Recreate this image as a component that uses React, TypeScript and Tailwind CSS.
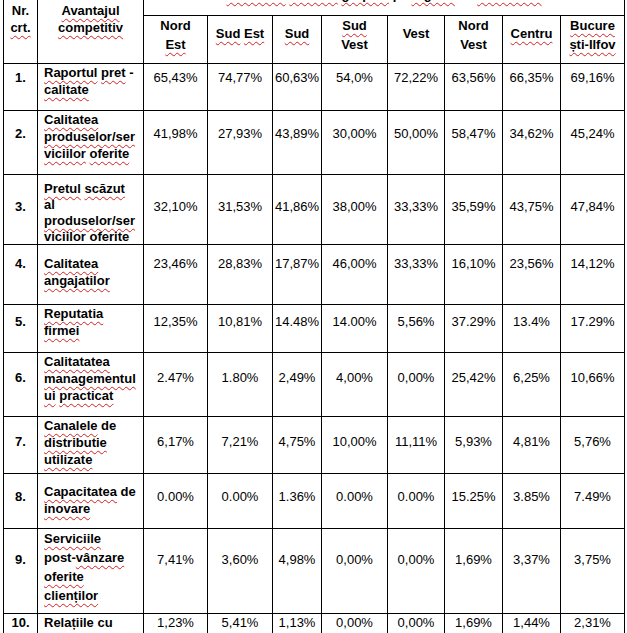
import React from "react";

type Row = {
  nr: string;
  label: string;
  vals: string[];
  lp: string;
  vp: string;
  lead: string;
};

const rows: Row[] = [
  { nr: "1.", label: "~Raportul ~pret -|~calitate", vals: ["65,43%", "74,77%", "60,63%", "54,0%", "72,22%", "63,56%", "66,35%", "69,16%"], lp: "pt-0", vp: "pt-[5px]", lead: "leading-[17px]" },
  { nr: "2.", label: "~Calitatea|~produselor/ser|~viciilor ~oferite", vals: ["41,98%", "27,93%", "43,89%", "30,00%", "50,00%", "58,47%", "34,62%", "45,24%"], lp: "pt-0", vp: "pt-[14px]", lead: "leading-[17px]" },
  { nr: "3.", label: "~Pretul ~scăzut|al|~produselor/ser|~viciilor ~oferite", vals: ["32,10%", "31,53%", "41,86%", "38,00%", "33,33%", "35,59%", "43,75%", "47,84%"], lp: "pt-[6px]", vp: "pt-[23px]", lead: "leading-[16px]" },
  { nr: "4.", label: "~Calitatea|~angajatilor", vals: ["23,46%", "28,83%", "17,87%", "46,00%", "33,33%", "16,10%", "23,56%", "14,12%"], lp: "pt-[10px]", vp: "pt-[10px]", lead: "leading-[17px]" },
  { nr: "5.", label: "~Reputatia|~firmei", vals: ["12,35%", "10,81%", "14.48%", "14.00%", "5,56%", "37.29%", "13.4%", "17.29%"], lp: "pt-0", vp: "pt-[8px]", lead: "leading-[17px]" },
  { nr: "6.", label: "~Calitatatea|~managementul|~ui ~practicat", vals: ["2.47%", "1.80%", "2,49%", "4,00%", "0,00%", "25,42%", "6,25%", "10,66%"], lp: "pt-0", vp: "pt-[16px]", lead: "leading-[17px]" },
  { nr: "7.", label: "~Canalele de|~distributie|~utilizate", vals: ["6,17%", "7,21%", "4,75%", "10,00%", "11,11%", "5,93%", "4,81%", "5,76%"], lp: "pt-0", vp: "pt-[16px]", lead: "leading-[17px]" },
  { nr: "8.", label: "~Capacitatea de|~inovare", vals: ["0.00%", "0.00%", "1.36%", "0.00%", "0.00%", "15.25%", "3.85%", "7.49%"], lp: "pt-[9px]", vp: "pt-[14px]", lead: "leading-[17px]" },
  { nr: "9.", label: "~Serviciile|post-~vânzare|~oferite|~clienților", vals: ["7,41%", "3,60%", "4,98%", "0,00%", "0,00%", "1,69%", "3,37%", "3,75%"], lp: "pt-0", vp: "pt-[22px]", lead: "leading-[19px]" },
  { nr: "10.", label: "Relațiile cu|~mediul ~politic", vals: ["1,23%", "5,41%", "1,13%", "0,00%", "0,00%", "1,69%", "1,44%", "2,31%"], lp: "pt-0", vp: "pt-0", lead: "leading-[17px]" },
];

const regions = ["Nord|~Est", "~Sud ~Est", "~Sud", "~Sud|Vest", "Vest", "Nord|Vest", "~Centru", "~Bucure|~ști-Ilfov"];

function Line({ text }: { text: string }) {
  const parts = text.split(/(~[^\s~]+)/).filter((p) => p !== "");
  return (
    <span className="block whitespace-pre">
      {parts.map((p, i) =>
        p.startsWith("~") ? (
          <span key={i} className="underline decoration-wavy decoration-[#d42020] decoration-1 underline-offset-[3px]">
            {p.slice(1)}
          </span>
        ) : (
          <span key={i}>{p}</span>
        )
      )}
    </span>
  );
}

function Lines({ text }: { text: string }) {
  return (
    <>
      {text.split("|").map((l, i) => (
        <Line key={i} text={l} />
      ))}
    </>
  );
}

const cell = "border-r border-b border-black overflow-hidden";

export default function App() {
  return (
    <div className="w-[627px] h-[633px] overflow-hidden bg-white text-black font-['Liberation_Sans',Arial,sans-serif] text-[13px]">
      <div className="ml-[3px] -mt-[22px] w-[622px] border-l border-black grid grid-cols-[34px_106px_64px_65px_49px_66px_57px_58px_58px_64px] grid-rows-[38px_48px_47px_64px_70px_60px_48px_64px_57px_55px_85px_50px]">
        <div className={`${cell} row-span-2 text-center font-bold leading-[17px] pt-[24px]`}>
          <Lines text="Nr.|~crt." />
        </div>
        <div className={`${cell} row-span-2 text-center font-bold leading-[17px] pt-[24px]`}>
          <Lines text="~Avantajul|~competitiv" />
        </div>
        <div className={`${cell} col-span-8 text-center font-bold leading-[17px] pt-[8px]`}>
          <Lines text="~Ponderea ~firmelor ~grupate pe ~regiuni de ~dezvoltare" />
        </div>
        {regions.map((r, i) => (
          <div
            key={i}
            className={`${cell} text-center font-bold leading-[19px] ${r.includes("|") ? "-mt-0 pt-0" : "pt-[8px]"}`}
          >
            <Lines text={r} />
          </div>
        ))}
        {rows.map((row) => (
          <React.Fragment key={row.nr}>
            <div className={`${cell} text-center font-bold leading-[17px] ${row.vp}`}>{row.nr}</div>
            <div className={`${cell} pl-[6px] font-bold ${row.lead} ${row.lp}`}>
              <Lines text={row.label} />
            </div>
            {row.vals.map((v, j) => (
              <div key={j} className={`${cell} text-center leading-[17px] ${row.vp}`}>
                {v}
              </div>
            ))}
          </React.Fragment>
        ))}
      </div>
    </div>
  );
}
